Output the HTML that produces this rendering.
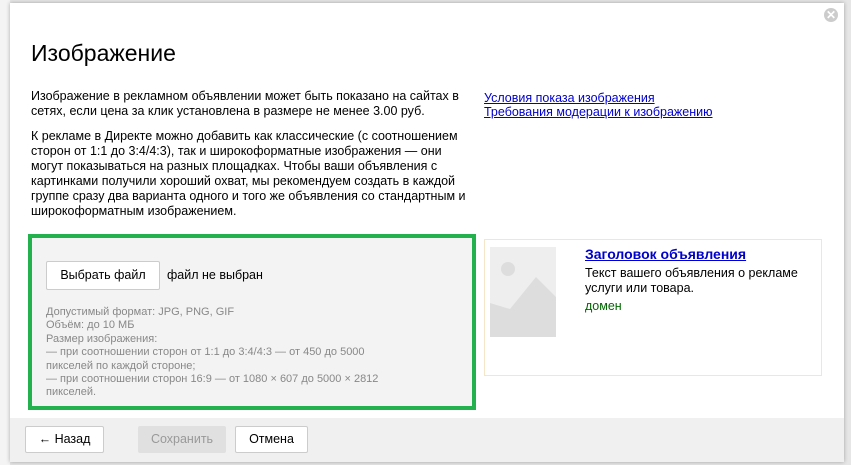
<!DOCTYPE html><html><head><meta charset="utf-8"><style>
body{margin:0;width:851px;height:465px;background:#e6e6e6;font-family:"Liberation Sans",Arial,sans-serif;position:relative;overflow:hidden}
.m{position:absolute;left:10px;top:3px;width:834px;height:459px;background:#fff;box-shadow:0 0 4px rgba(0,0,0,.3)}
.a{position:absolute}
p{margin:0}
.t{font-size:12.5px;line-height:15px;color:#000}
.btn{position:absolute;background:#fff;border:1px solid #ccc;border-radius:2px;font-size:12.5px;text-align:center;box-sizing:border-box}
a{color:#00c;text-decoration:underline}
</style></head><body>
<div class="a" style="left:0;top:0;width:10px;height:465px;background:#f4f4f4"></div>
<div class="m">
<div class="a" style="left:814px;top:5px;width:14px;height:14px;border-radius:50%;background:#ccc;color:#fff;font-size:12px;line-height:14px;text-align:center;font-weight:bold">✕</div>
<div class="a" style="left:21px;top:37px;font-size:23px;color:#000">Изображение</div>
<div class="a t" style="left:21px;top:86px;width:445px">Изображение в рекламном объявлении может быть показано на сайтах в сетях, если цена за клик установлена в размере не менее 3.00 руб.</div>
<div class="a t" style="left:21px;top:126px;width:445px">К рекламе в Директе можно добавить как классические (с соотношением сторон от 1:1 до 3:4/4:3), так и широкоформатные изображения — они могут показываться на разных площадках. Чтобы ваши объявления с картинками получили хороший охват, мы рекомендуем создать в каждой группе сразу два варианта одного и того же объявления со стандартным и широкоформатным изображением.</div>
<div class="a" style="left:474px;top:88px;font-size:12.5px;line-height:14px"><a>Условия показа изображения</a><br><a>Требования модерации к изображению</a></div>
<div class="a" style="left:18px;top:231px;width:440px;height:168px;border:4px solid #22b14c;background:#f3f3f3"></div>
<div class="btn" style="left:36px;top:258px;width:114px;height:29px;line-height:27px">Выбрать файл</div>
<div class="a t" style="left:157px;top:265px">файл не выбран</div>
<div class="a" style="left:36px;top:303px;font-size:11px;line-height:13.4px;color:#888;width:355px">Допустимый формат: JPG, PNG, GIF<br>Объём: до 10 МБ<br>Размер изображения:<br>— при соотношении сторон от 1:1 до 3:4/4:3 — от 450 до 5000 пикселей по каждой стороне;<br>— при соотношении сторон 16:9 — от 1080 × 607 до 5000 × 2812 пикселей.</div>
<div class="a" style="left:474px;top:236px;width:336px;height:135px;border:1px solid #f5e6c8"></div>
<svg class="a" style="left:480px;top:244px" width="66" height="90"><rect width="66" height="90" fill="#eee"/><circle cx="18" cy="22" r="7" fill="#ddd"/><path d="M0 56 L20 62 L46 30 L66 50 V90 H0Z" fill="#ddd"/></svg>
<div class="a" style="left:575px;top:243px;font-size:14px;font-weight:bold"><a>Заголовок объявления</a></div>
<div class="a t" style="left:575px;top:263px;width:235px">Текст вашего объявления о рекламе услуги или товара.</div>
<div class="a t" style="left:575px;top:296px;color:#060">домен</div>
<div class="a" style="left:0;top:415px;width:834px;height:44px;background:#f0f0f0"></div>
<div class="btn" style="left:15px;top:423px;width:79px;height:27px;line-height:25px">← Назад</div>
<div class="btn" style="left:128px;top:423px;width:88px;height:27px;line-height:25px;background:#e0e0e0;border-color:#e0e0e0;color:#999">Сохранить</div>
<div class="btn" style="left:225px;top:423px;width:73px;height:27px;line-height:25px">Отмена</div>
</div>
</body></html>
